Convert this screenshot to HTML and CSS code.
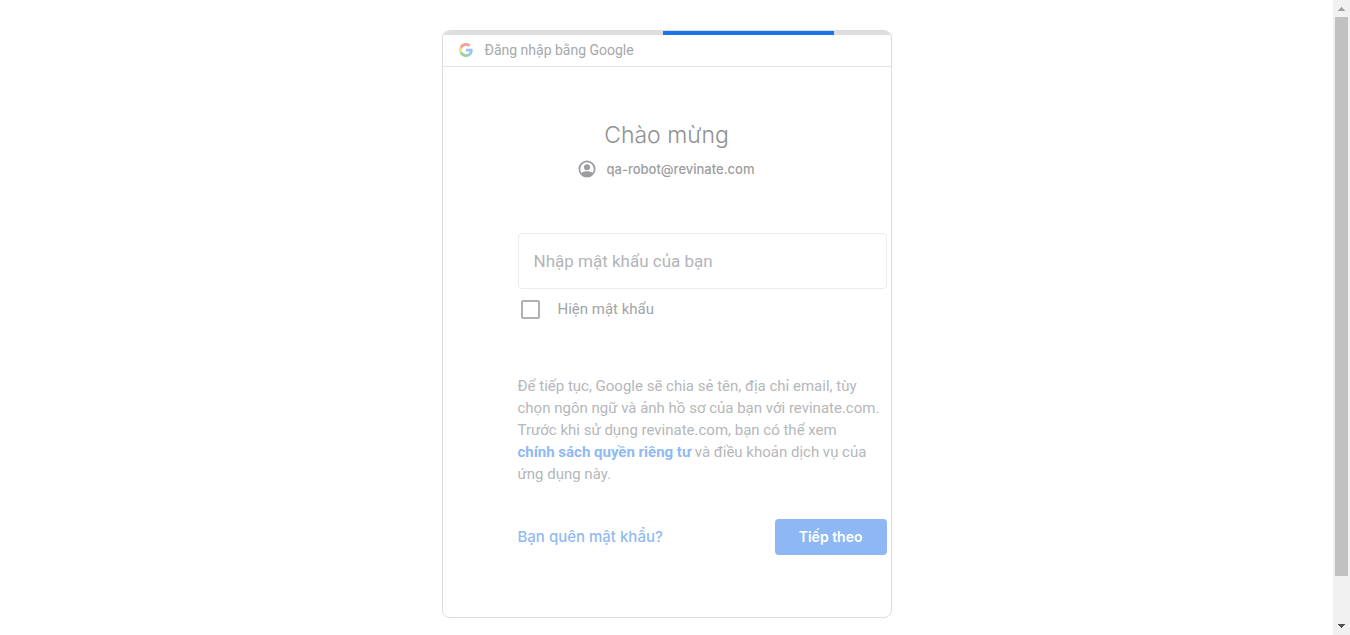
FILE: index.html
```html
<!DOCTYPE html>
<html lang="vi">
<head>
<meta charset="utf-8">
<title>Đăng nhập bằng Google</title>
<link rel="stylesheet" href="styles.css">
</head>
<body>
<main class="page">
  <section class="card">
    <div class="progress"><div class="progress-value"></div></div>
    <header class="brand">
      <svg class="brand-logo" viewBox="0 0 48 48" aria-hidden="true">
        <path fill="#f49f99" d="M24 9.5c3.54 0 6.71 1.22 9.21 3.6l6.85-6.85C35.9 2.38 30.47 0 24 0 14.62 0 6.51 5.38 2.56 13.22l7.98 6.19C12.43 13.72 17.74 9.5 24 9.5z"/>
        <path fill="#9ec0f9" d="M46.98 24.55c0-1.57-.15-3.09-.38-4.55H24v9.02h12.94c-.58 2.96-2.26 5.48-4.78 7.18l7.73 6c4.51-4.18 7.09-10.36 7.09-17.65z"/>
        <path fill="#fddd80" d="M10.53 28.59c-.48-1.45-.76-2.99-.76-4.59s.27-3.14.76-4.59l-7.98-6.19C.92 16.46 0 20.12 0 24c0 3.88.92 7.54 2.56 10.78l7.97-6.19z"/>
        <path fill="#97d2a6" d="M24 48c6.48 0 11.93-2.13 15.89-5.81l-7.73-6c-2.15 1.45-4.92 2.3-8.16 2.3-6.26 0-11.57-4.22-13.47-9.91l-7.98 6.19C6.51 42.62 14.62 48 24 48z"/>
      </svg>
      <span>Đăng nhập bằng Google</span>
    </header>
    <div class="welcome">
      <h1 class="title">Chào mừng</h1>
      <div class="account">
        <svg class="account-icon" viewBox="0 0 20 20" aria-hidden="true">
          <circle cx="10" cy="10" r="8.5" fill="none" stroke="currentColor" stroke-width="2"/>
          <circle cx="10" cy="8" r="3.4" fill="currentColor"/>
          <path fill="currentColor" d="M3.5 14.6C5 12.9 7.6 12.4 10 12.4s5 .5 6.5 2.2A8 8 0 0 1 10 18a8 8 0 0 1-6.5-3.4z"/>
        </svg>
        <span>qa-robot@revinate.com</span>
      </div>
    </div>
    <form class="form">
      <input class="password" type="password" placeholder="Nhập mật khẩu của bạn" aria-label="Nhập mật khẩu của bạn">
      <label class="show"><input class="show-box" type="checkbox"><span>Hiện mật khẩu</span></label>
      <p class="notice">Để tiếp tục, Google sẽ chia sẻ tên, địa chỉ email, tùy chọn ngôn ngữ và ảnh hồ sơ của bạn với revinate.com. Trước khi sử dụng revinate.com, bạn có thể xem <a class="policy" href="#">chính sách quyền riêng tư</a> và điều khoản dịch vụ của ứng dụng này.</p>
      <div class="actions">
        <a class="forgot" href="#">Bạn quên mật khẩu?</a>
        <button class="next" type="button">Tiếp theo</button>
      </div>
    </form>
  </section>
</main>
<div class="scrollbar" aria-hidden="true">
  <svg class="arrow" viewBox="0 0 17 17"><path fill="#a3a3a3" d="M5 11h7v-1h-1V9h-1V8H9V7H8v1H7v1H6v1H5z"/></svg>
  <div class="track"><div class="thumb"></div></div>
  <svg class="arrow" viewBox="0 0 17 17"><path fill="#505050" d="M5 6h7v1h-1v1h-1v1H9v1H8V9H7V8H6V7H5z"/></svg>
</div>
</body>
</html>
```
FILE: styles.css
```css
* { box-sizing: border-box; }
body {
  margin: 0;
  height: 100vh;
  display: flex;
  background: #fff;
  color: #b5b7b9;
  font-family: Roboto, "Liberation Sans", sans-serif;
  font-size: 15px;
}
.page {
  flex: 1;
  display: flex;
  justify-content: center;
  align-items: flex-start;
  padding: 30px 16px 16px;
}
.card {
  width: 100%;
  max-width: 450px;
  padding-bottom: 62px;
  border: 1px solid #dadce0;
  border-radius: 8px;
  overflow: hidden;
}
.progress {
  height: 4px;
  padding-left: calc(50% - 4px);
  background: #dedede;
}
.progress-value {
  width: 75%;
  height: 100%;
  background: #1a73e8;
}
.brand {
  display: flex;
  align-items: center;
  gap: 12px;
  height: 32px;
  padding: 0 16px 2px;
  border-bottom: 1px solid #e3e4e6;
  color: #a6a8aa;
  font-size: 14px;
}
.brand-logo { width: 14px; height: 14px; }
.welcome {
  display: flex;
  flex-direction: column;
  align-items: center;
  padding-top: 52px;
  font-family: Inter, Roboto, sans-serif;
}
.title {
  margin: 0;
  color: #8f9092;
  font-size: 23px;
  font-weight: 300;
  line-height: 32px;
}
.account {
  display: flex;
  align-items: center;
  gap: 10px;
  height: 36px;
  color: #9b9da0;
  font-size: 13px;
  font-weight: 500;
}
.account-icon { width: 18px; height: 18px; }
.form { padding: 46px 4px 0 75px; }
.password {
  display: block;
  width: 100%;
  height: 56px;
  padding: 0 15px;
  border: 1px solid #ebecee;
  border-radius: 4px;
  background: #fff;
  font: 17px Roboto, sans-serif;
}
.password::placeholder { color: #b3b5b8; }
.show {
  display: flex;
  align-items: center;
  gap: 18px;
  height: 40px;
  padding-left: 3px;
  color: #a2a4a6;
}
.show-box {
  appearance: none;
  width: 19px;
  height: 19px;
  margin: 0;
  border: 2px solid #b0b1b3;
  border-radius: 2px;
}
.show-box:checked { background: #8db7f4; }
.notice {
  margin: 46px 0 34px;
  line-height: 22px;
}
.policy {
  color: #8fbaf5;
  font-weight: 700;
  text-decoration: none;
  white-space: nowrap;
}
.actions {
  display: flex;
  align-items: center;
  justify-content: space-between;
  font-family: Inter, Roboto, sans-serif;
}
.forgot {
  padding-bottom: 2px;
  color: #8fbaf5;
  font-weight: 500;
  text-decoration: none;
}
.next {
  height: 36px;
  padding: 0 24px 2px;
  border: 0;
  border-radius: 4px;
  background: #8db8f4;
  color: #fff;
  font: 600 14px Inter, Roboto, sans-serif;
}
.scrollbar {
  display: flex;
  flex-direction: column;
  width: 17px;
  background: #f1f1f1;
}
.arrow { width: 17px; height: 17px; }
.track { flex: 1; padding: 0 2px; }
.thumb { height: 93%; background: #c1c1c1; }
```
